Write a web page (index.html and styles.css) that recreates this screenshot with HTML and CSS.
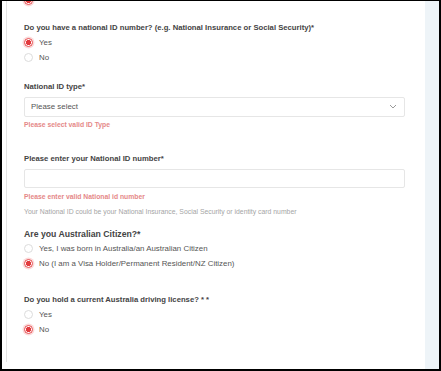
FILE: index.html
```html
<!DOCTYPE html>
<html lang="en">
<head>
    <meta charset="UTF-8">
    <meta name="viewport" content="width=device-width, initial-scale=1.0">
    <title>National ID</title>
    <link rel="stylesheet" href="styles.css">
</head>
<body>
    <div class="frame">
        <div class="card">
            <div class="options top-cut">
                <label class="radio"><span class="dot checked"></span></label>
            </div>

            <div class="field">
                <p class="question">Do you have a national ID number? (e.g. National Insurance or Social Security)*</p>
                <div class="options">
                    <label class="radio"><span class="dot checked"></span>Yes</label>
                    <label class="radio"><span class="dot"></span>No</label>
                </div>
            </div>

            <div class="field id-type">
                <p class="question">National ID type*</p>
                <div class="select">
                    <span>Please select</span>
                    <svg width="8" height="5" viewBox="0 0 8 5"><path d="M1 1l3 3 3-3" fill="none" stroke="#9a9a9a" stroke-width="1"/></svg>
                </div>
                <p class="error">Please select valid ID Type</p>
            </div>

            <div class="field id-number">
                <p class="question">Please enter your National ID number*</p>
                <div class="input"></div>
                <p class="error">Please enter valid National id number</p>
                <p class="hint">Your National ID could be your National Insurance, Social Security or identity card number</p>
            </div>

            <div class="field citizen">
                <p class="question large">Are you Australian Citizen?*</p>
                <div class="options">
                    <label class="radio"><span class="dot"></span>Yes, I was born in Australia/an Australian Citizen</label>
                    <label class="radio"><span class="dot checked"></span>No (I am a Visa Holder/Permanent Resident/NZ Citizen)</label>
                </div>
            </div>

            <div class="field license">
                <p class="question">Do you hold a current Australia driving license? * *</p>
                <div class="options">
                    <label class="radio"><span class="dot"></span>Yes</label>
                    <label class="radio"><span class="dot checked"></span>No</label>
                </div>
            </div>
        </div>
        <div class="side"></div>
    </div>
</body>
</html>
```

FILE: styles.css
```css
*{
    margin: 0;
    padding: 0;
    box-sizing: border-box;
}

body{
    width: 441px;
    height: 371px;
    background: #000;
    overflow: hidden;
    font-family: "Liberation Sans", Arial, sans-serif;
}

.frame{
    display: flex;
    height: 371px;
    border-style: solid;
    border-color: #000;
    border-width: 1px 2px 2px 2px;
    background: #fff;
    overflow: hidden;
}

.card{
    width: 418px;
    margin-left: 4px;
    height: 361px;
    border-left: 1px solid #e4e4e4;
    padding: 0 19px 0 17px;
    display: flex;
    flex-direction: column;
    overflow: hidden;
}

.side{
    flex: 1;
    margin-left: 1px;
    background: #eef4f8;
}

.field{
    margin-top: 14px;
}

.field.id-type{
    margin-top: 16px;
}

.field.id-number{
    margin-top: 23px;
}

.field.citizen{
    margin-top: 11.5px;
}

.field.license{
    margin-top: 23px;
}

.question{
    font-size: 7.7px;
    line-height: 12px;
    font-weight: bold;
    color: #444;
}

.question.large{
    font-size: 8.7px;
}

.options{
    display: flex;
    flex-direction: column;
    margin-top: 1px;
}

.options.top-cut{
    margin-top: -8.5px;
}

.radio{
    display: flex;
    align-items: center;
    height: 15px;
    font-size: 7.9px;
    color: #555;
}

.dot{
    width: 9px;
    height: 9px;
    border-radius: 50%;
    border: 1px solid #dcdcdc;
    margin-right: 6px;
    flex-shrink: 0;
    background: #fff;
}

.dot.checked{
    border-color: #e5474a;
    background: radial-gradient(circle, #e23b3e 0 2.4px, #fff 2.9px);
    box-shadow: 0 0 0 1.5px #fbdada;
}

.select, .input{
    height: 20px;
    border: 1px solid #e6e6e6;
    border-radius: 2px;
    margin-top: 4px;
}

.select{
    display: flex;
    align-items: center;
    justify-content: space-between;
    padding: 0 7px 0 6px;
    font-size: 7.9px;
    color: #555;
}

.input{
    margin-top: 4px;
    height: 19px;
}

.error{
    font-size: 6.8px;
    line-height: 10px;
    font-weight: bold;
    color: #e58888;
    margin-top: 3px;
}

.input + .error{
    margin-top: 4px;
}

.hint{
    font-size: 6.85px;
    line-height: 10px;
    color: #a5a5a5;
    margin-top: 5px;
}
```
